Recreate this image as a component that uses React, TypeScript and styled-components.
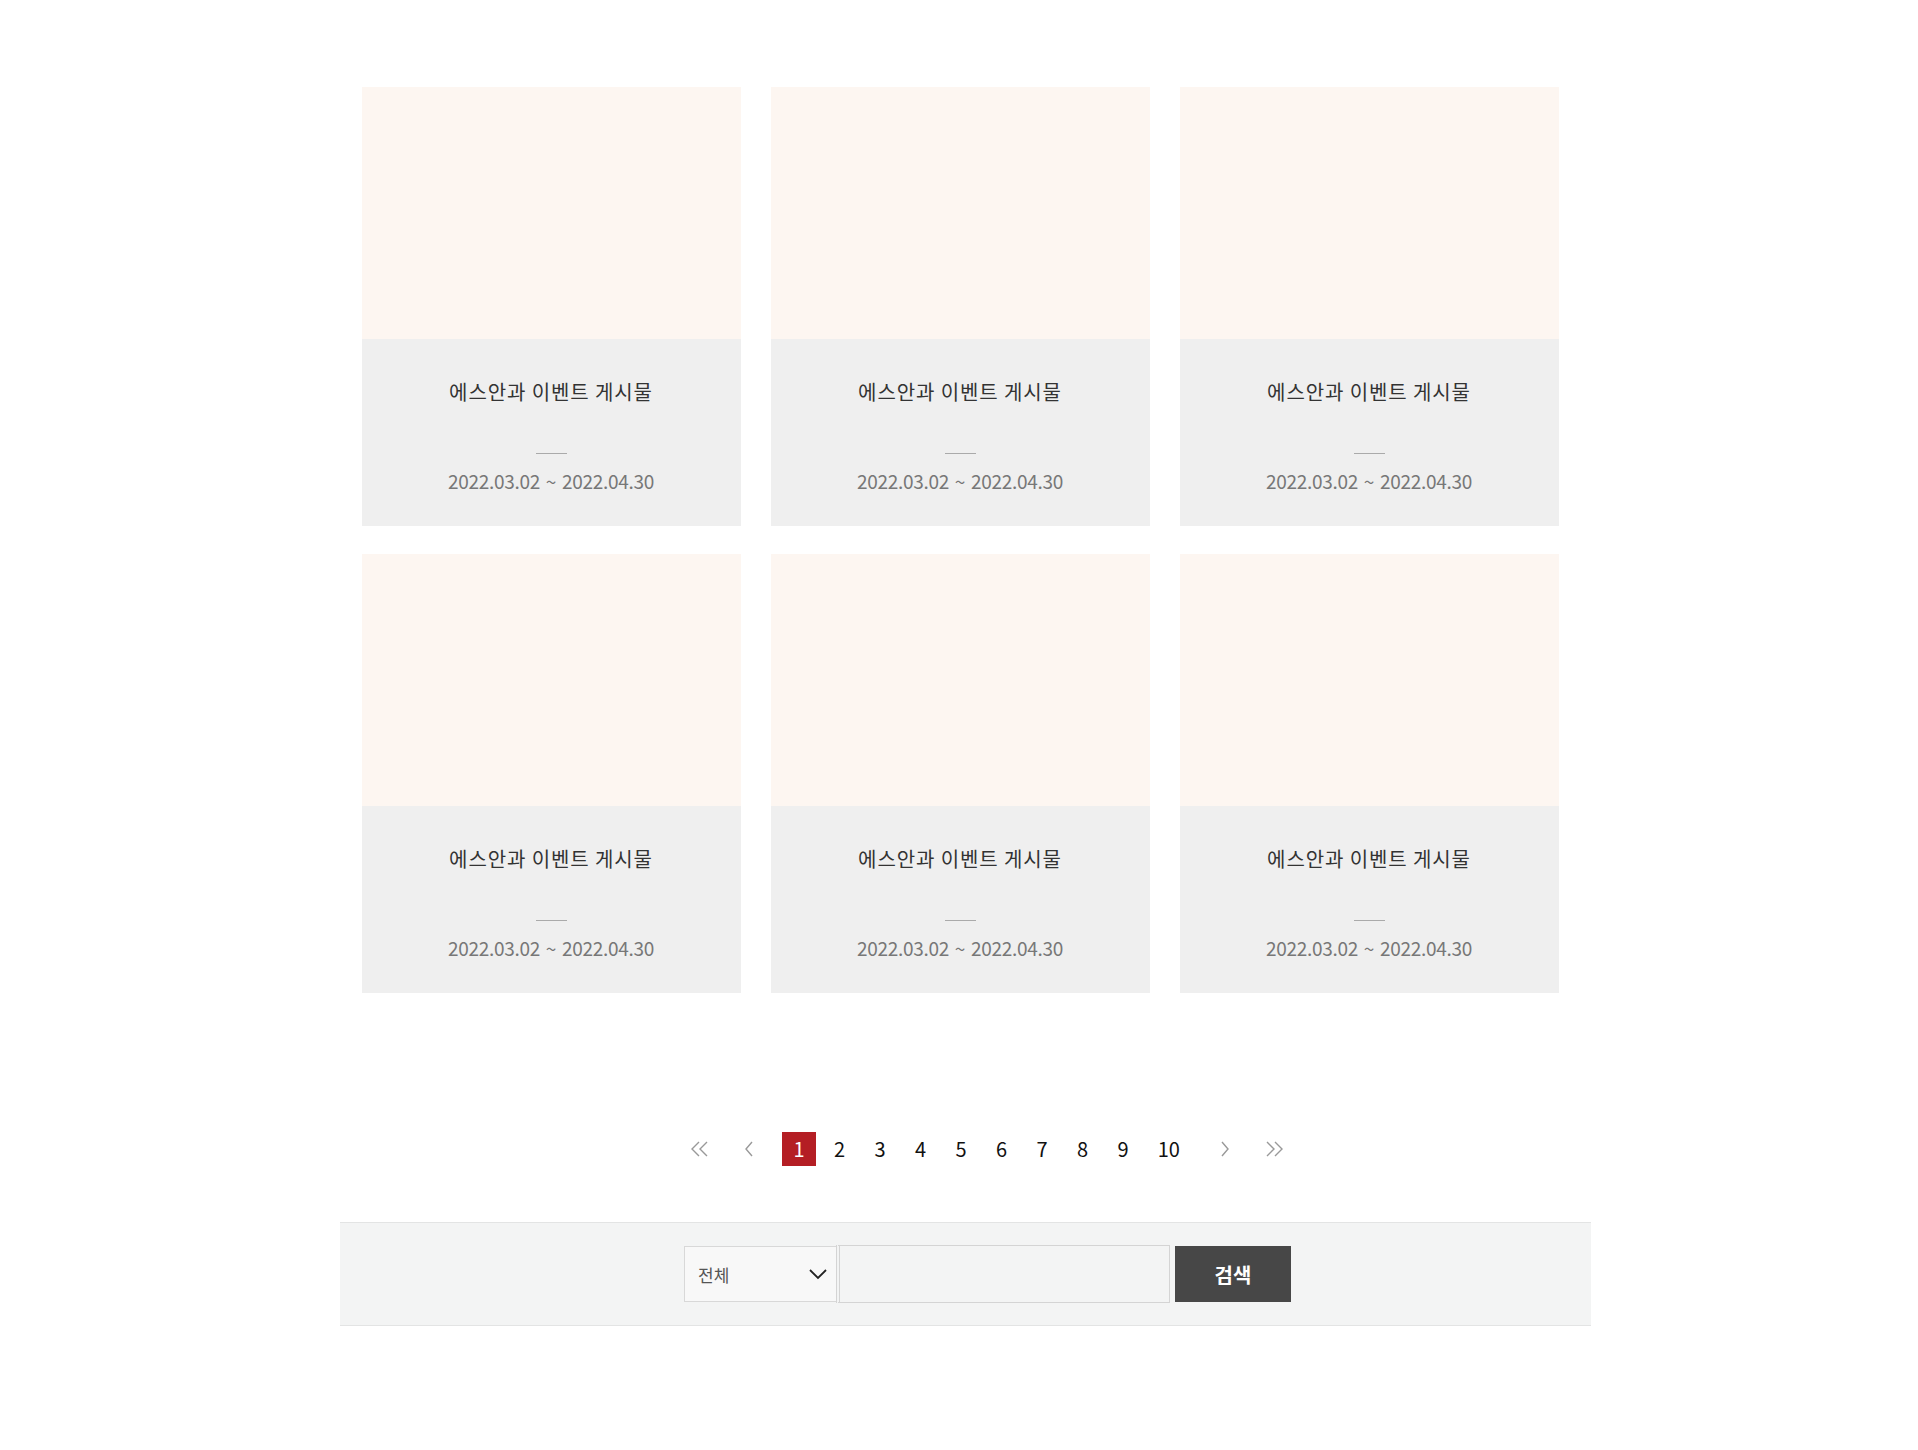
import styled, { createGlobalStyle } from "styled-components"

const GlobalStyle = createGlobalStyle`
    html, body {
        margin: 0;
        padding: 0;
        background: #fff;
        font-family: "Noto Sans CJK KR", "Noto Sans", sans-serif;
    }
    * { box-sizing: border-box; }
`

const Page = styled.div`
    width: 100%;
    min-height: 1450px;
    padding-top: 87px;
    display: flex;
    flex-direction: column;
`
const EventGrid = styled.ul`
    list-style: none;
    margin: 0 auto;
    padding: 0;
    display: grid;
    grid-template-columns: repeat(3, 379px);
    column-gap: 30px;
    row-gap: 28px;
    transform: translateX(1px);
`
const Card = styled.li`
    display: flex;
    flex-direction: column;
    height: 439px;
    cursor: pointer;
`
const Thumb = styled.div`
    height: 252px;
    background-color: #fdf6f1;
`
const CardBody = styled.div`
    flex: 1;
    display: flex;
    flex-direction: column;
    align-items: center;
    padding-top: 39px;
    background-color: #efefef;
`
const Title = styled.h3`
    margin: 0;
    font-size: 20px;
    line-height: 28px;
    font-weight: 400;
    color: #333;
    letter-spacing: 0.9px;
`
const Divider = styled.span`
    display: block;
    width: 31px;
    height: 1px;
    margin-top: 47px;
    background-color: #aaa;
`
const Period = styled.p`
    margin: 15px 0 0;
    font-size: 19px;
    line-height: 24px;
    color: #777;
    letter-spacing: -0.3px;
    word-spacing: 2px;
`

const Pager = styled.nav`
    margin-top: 139px;
    padding-left: 56px;
    display: flex;
    justify-content: center;
    align-items: center;
    height: 34px;
`
const PageNums = styled.div`
    display: flex;
    align-items: center;
    gap: 6.5px;
    margin: 0 18px 0 17px;
`
const ArrowGroup = styled.div`
    display: flex;
    gap: 14px;
`
const ArrowBtn = styled.a`
    width: 34px;
    height: 34px;
    display: flex;
    align-items: center;
    justify-content: center;
    color: #999;
    cursor: pointer;
`
const PageNum = styled.a<{ $active?: boolean }>`
    min-width: 34px;
    height: 34px;
    padding: 0 11px;
    display: flex;
    align-items: center;
    justify-content: center;
    font-size: 20px;
    line-height: 1;
    color: ${props => props.$active ? "#fff" : "#111"};
    background-color: ${props => props.$active ? "#b41e24" : "transparent"};
    cursor: pointer;
`

const SearchBar = styled.form`
    width: 1251px;
    height: 104px;
    margin: 56px 0 0 340px;
    padding-left: 344px;
    display: flex;
    align-items: center;
    background-color: #f3f4f4;
    border-top: 1px solid #e3e4e4;
    border-bottom: 1px solid #e3e4e4;
`
const SelectBox = styled.div`
    width: 153px;
    height: 56px;
    padding: 0 8px 0 13px;
    display: flex;
    align-items: center;
    justify-content: space-between;
    background-color: #f8f8f8;
    border: 1px solid #d8d8d8;
    font-size: 17px;
    color: #555;
`
const KeywordInput = styled.input`
    width: 334px;
    height: 58px;
    margin-left: -1px;
    border: 1px solid #d4d4d4;
    border-left: 4px double #d4d4d4;
    background-color: #f3f4f4;
    outline: none;
`
const SearchBtn = styled.button`
    width: 116px;
    height: 56px;
    margin-left: 5px;
    border: 0;
    background-color: #474747;
    color: #fff;
    font-family: "Noto Sans CJK KR", sans-serif;
    font-size: 20px;
    font-weight: 700;
    cursor: pointer;
`

const events = Array.from({ length: 6 }, () => ({
    title: "에스안과 이벤트 게시물",
    period: "2022.03.02 ~ 2022.04.30",
}))

function Chevron({ dir, double }: { dir: "left" | "right", double?: boolean }) {
    const flip = dir === "right" ? "scale(-1,1) translate(-20,0)" : undefined
    return (
        <svg width="20" height="16" viewBox="0 0 20 16" fill="none" stroke="currentColor" strokeWidth="1.4">
            <g transform={flip}>
                {double ? (
                    <>
                        <path d="M9 1 L2 8 L9 15" />
                        <path d="M17 1 L10 8 L17 15" />
                    </>
                ) : (
                    <path d="M14 1 L8 8 L14 15" />
                )}
            </g>
        </svg>
    )
}

export default function App() {
    return (
        <Page>
            <GlobalStyle />
            <EventGrid>
                {events.map((element, index) => (
                    <Card key={index}>
                        <Thumb />
                        <CardBody>
                            <Title>{element.title}</Title>
                            <Divider />
                            <Period>{element.period}</Period>
                        </CardBody>
                    </Card>
                ))}
            </EventGrid>

            <Pager>
                <ArrowGroup>
                    <ArrowBtn><Chevron dir="left" double /></ArrowBtn>
                    <ArrowBtn><Chevron dir="left" /></ArrowBtn>
                </ArrowGroup>
                <PageNums>
                    {[1, 2, 3, 4, 5, 6, 7, 8, 9, 10].map(num => (
                        <PageNum key={num} $active={num === 1}>{num}</PageNum>
                    ))}
                </PageNums>
                <ArrowGroup>
                    <ArrowBtn><Chevron dir="right" /></ArrowBtn>
                    <ArrowBtn><Chevron dir="right" double /></ArrowBtn>
                </ArrowGroup>
            </Pager>

            <SearchBar onSubmit={e => e.preventDefault()}>
                <SelectBox>
                    <span>전체</span>
                    <svg width="20" height="12" viewBox="0 0 20 12" fill="none" stroke="#222" strokeWidth="1.8">
                        <path d="M2 2 L10 10 L18 2" />
                    </svg>
                </SelectBox>
                <KeywordInput type="text" />
                <SearchBtn type="submit">검색</SearchBtn>
            </SearchBar>
        </Page>
    )
}
